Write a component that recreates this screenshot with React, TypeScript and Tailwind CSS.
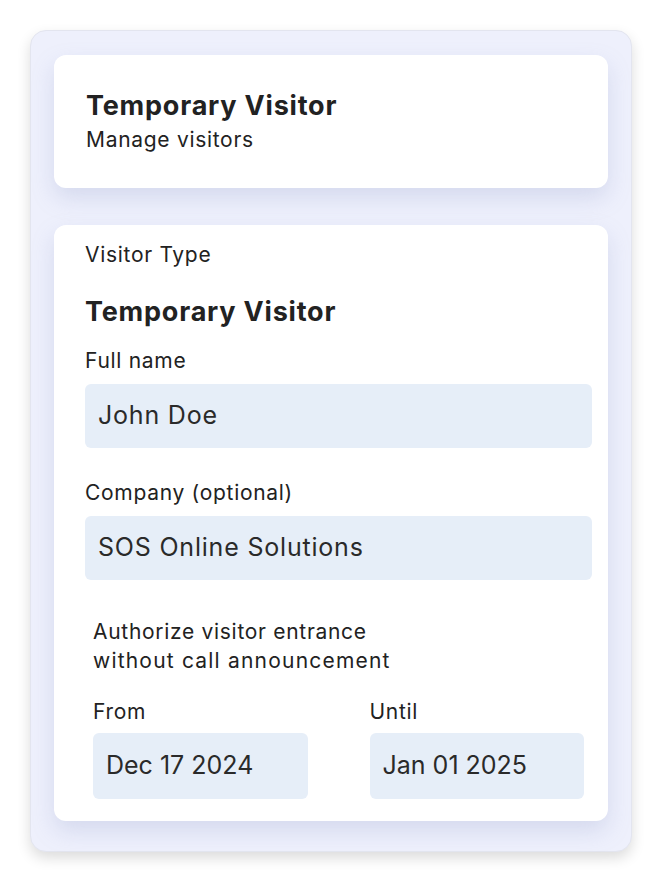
const font = { fontFamily: '"Inter", "Liberation Sans", sans-serif' };

function Field({ label, value }: { label: string; value: string }) {
  return (
    <>
      <p className="text-[21px] leading-[28px] text-[#222] tracking-[0.7px]">{label}</p>
      <div className="mt-[9px] h-16 rounded-md bg-[#e6eef8] pl-[13px] flex items-center text-[25px] text-[#2a2a2a] tracking-[0.8px]">
        {value}
      </div>
    </>
  );
}

export default function App() {
  return (
    <div className="min-h-screen bg-white pt-[30px] pl-[30px]" style={font}>
      <div className="w-[602px] h-[822px] rounded-2xl bg-[#eef0fc] border border-[#e3e5ef] shadow-[0_6px_14px_rgba(0,0,0,0.14)] px-[23px] pt-[24px]">
        {/* header */}
        <div className="h-[133px] rounded-xl bg-white shadow-[0_10px_22px_rgba(140,150,200,0.25)] pl-[32px] flex flex-col justify-center">
          <h1 className="text-[27px] leading-[36px] font-bold text-[#222] tracking-[0.8px]">Temporary Visitor</h1>
          <p className="text-[21px] leading-[32px] text-[#222] tracking-[0.7px]">Manage visitors</p>
        </div>

        {/* form */}
        <div className="mt-[37px] h-[596px] rounded-xl bg-white shadow-[0_10px_22px_rgba(140,150,200,0.25)] pl-[31px] pr-[16px] pt-[16px]">
          <p className="text-[21px] leading-[28px] text-[#222] tracking-[0.7px]">Visitor Type</p>
          <h2 className="mt-[27px] text-[27px] leading-[32px] font-bold text-[#222] tracking-[0.8px]">Temporary Visitor</h2>
          <div className="mt-[19px]">
            <Field label="Full name" value="John Doe" />
          </div>
          <div className="mt-[31px]">
            <Field label="Company (optional)" value="SOS Online Solutions" />
          </div>

          <div className="px-2 mt-[37px]">
            <p className="text-[21px] leading-[29px] text-[#222] tracking-[0.7px]">
              Authorize visitor entrance
              <br />
              <span className="tracking-[1.2px]">without call announcement</span>
            </p>
            <div className="mt-[23px] grid grid-cols-2 gap-[62px]">
              {[
                ['From', 'Dec 17 2024'],
                ['Until', 'Jan 01 2025'],
              ].map(([label, value]) => (
                <div key={label}>
                  <p className="text-[21px] leading-[28px] text-[#222] tracking-[0.7px]">{label}</p>
                  <div className="mt-[7px] h-[66px] rounded-md bg-[#e6eef8] pl-[13px] flex items-center text-[25px] text-[#2a2a2a]">
                    {value}
                  </div>
                </div>
              ))}
            </div>
          </div>
        </div>
      </div>
    </div>
  );
}
